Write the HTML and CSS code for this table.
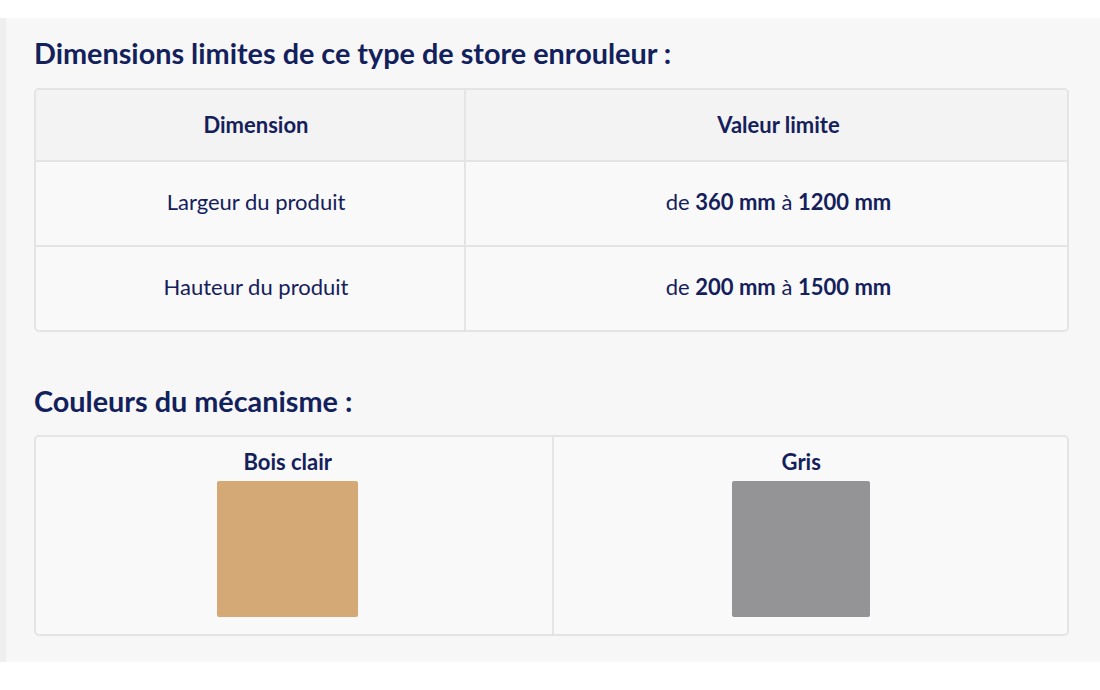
FILE: index.html
```html
<!DOCTYPE html>
<html lang="fr">
<head>
<meta charset="utf-8">
<link rel="stylesheet" href="styles.css">
</head>
<body>
<section class="panel">
  <h2 class="title">Dimensions limites de ce type de store enrouleur :</h2>
  <div class="dims">
    <div class="cell head c1">Dimension</div>
    <div class="cell head c2">Valeur limite</div>
    <div class="cell row c1">Largeur du produit</div>
    <div class="cell row c2"><span>de <b>360 mm</b> à <b>1200 mm</b></span></div>
    <div class="cell row last c1">Hauteur du produit</div>
    <div class="cell row last c2"><span>de <b>200 mm</b> à <b>1500 mm</b></span></div>
  </div>
  <h2 class="title title2">Couleurs du mécanisme :</h2>
  <div class="colors">
    <div class="color">
      <div class="label">Bois clair</div>
      <div class="swatch wood"></div>
    </div>
    <div class="color second">
      <div class="label">Gris</div>
      <div class="swatch grey"></div>
    </div>
  </div>
</section>
</body>
</html>
```
FILE: styles.css
```css
html, body {
  margin: 0;
  padding: 0;
  background: #ffffff;
}
body {
  font-family: "Lato", "Noto Sans", sans-serif;
  color: #14205a;
  width: 1100px;
  height: 690px;
  overflow: hidden;
}
.panel {
  margin-top: 18px;
  height: 644px;
  box-sizing: border-box;
  background: #f7f7f8;
  border-left: 6px solid #efeff0;
  padding: 17px 31px 0 28px;
}
.title {
  margin: 0;
  font-size: 28.8px;
  line-height: 36px;
  font-weight: 700;
  color: #12215b;
}
.dims {
  margin-top: 17px;
  display: grid;
  grid-template-columns: 430px 1fr;
  border: 2px solid #e4e4e7;
  border-radius: 5px;
  overflow: hidden;
  background: #f9f9fa;
}
.cell {
  display: flex;
  align-items: center;
  justify-content: center;
  font-size: 22px;
  box-sizing: border-box;
  border-bottom: 2px solid #e4e4e7;
}
.cell span {
  white-space: pre;
}
.cell.c1 {
  border-right: 2px solid #e4e4e7;
  padding-left: 12px;
}
.cell.c2 {
  padding-left: 24px;
}
.cell.head {
  height: 72px;
  background: #f3f3f4;
  font-weight: 700;
  padding-bottom: 2px;
}
.cell.row {
  height: 85px;
  padding-bottom: 4px;
}
.cell.row.last {
  height: 83px;
  border-bottom: 0;
}
.cell b {
  font-weight: 700;
}
.title2 {
  margin-top: 51px;
}
.colors {
  margin-top: 16px;
  display: grid;
  grid-template-columns: 1fr 1fr;
  border: 2px solid #e4e4e7;
  border-radius: 5px;
  background: #f9f9fa;
  height: 201px;
  box-sizing: border-box;
}
.color {
  display: flex;
  flex-direction: column;
  align-items: center;
  padding-top: 13px;
  padding-right: 12px;
}
.color.second {
  border-left: 2px solid #e4e4e7;
  padding-right: 18px;
}
.label {
  font-size: 22px;
  font-weight: 700;
  line-height: 24px;
}
.swatch {
  margin-top: 7px;
  height: 136px;
  border-radius: 2px;
}
.wood {
  width: 141px;
  background: #d4a975;
}
.grey {
  width: 138px;
  background: #949496;
}
```
